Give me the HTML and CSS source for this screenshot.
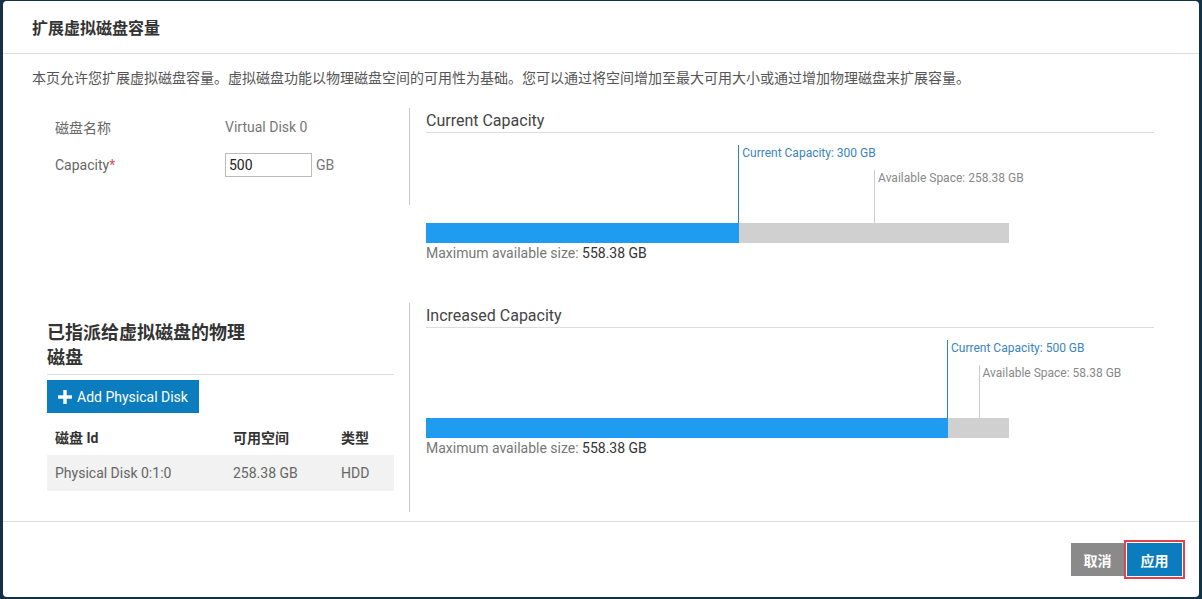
FILE: index.html
```html
<!DOCTYPE html>
<html lang="zh-CN">
<head>
    <meta charset="UTF-8">
    <meta name="viewport" content="width=device-width, initial-scale=1.0">
    <title>扩展虚拟磁盘容量</title>
    <link rel="stylesheet" href="styles.css">
</head>
<body>
    <div class="modal">
        <div class="modal-header">
            <h1>扩展虚拟磁盘容量</h1>
        </div>

        <div class="modal-body">
            <p class="intro">本页允许您扩展虚拟磁盘容量。虚拟磁盘功能以物理磁盘空间的可用性为基础。您可以通过将空间增加至最大可用大小或通过增加物理磁盘来扩展容量。</p>

            <div class="row row-top">
                <div class="left-col form-col">
                    <div class="form-row">
                        <span class="form-label">磁盘名称</span>
                        <span class="form-value">Virtual Disk 0</span>
                    </div>
                    <div class="form-row">
                        <span class="form-label">Capacity<span class="required">*</span></span>
                        <span class="form-value">
                            <input type="text" class="capacity-input" value="500">
                            <span class="unit">GB</span>
                        </span>
                    </div>
                </div>
                <div class="right-col">
                    <h2>Current Capacity</h2>
                    <div class="chart" data-current="300" data-max="558.38"></div>
                    <p class="max-size">Maximum available size: <span>558.38 GB</span></p>
                </div>
            </div>

            <div class="row row-bottom">
                <div class="left-col disk-col">
                    <h3>已指派给虚拟磁盘的物理磁盘</h3>
                    <button class="btn-add">
                        <svg width="14" height="14" viewBox="0 0 14 14"><rect x="5.3" y="0" width="3.4" height="14" fill="#fff"/><rect x="0" y="5.3" width="14" height="3.4" fill="#fff"/></svg>
                        Add Physical Disk
                    </button>
                    <table class="disk-table">
                        <thead>
                            <tr>
                                <th class="c-id">磁盘 Id</th>
                                <th class="c-free">可用空间</th>
                                <th class="c-type">类型</th>
                            </tr>
                        </thead>
                        <tbody>
                            <tr>
                                <td>Physical Disk 0:1:0</td>
                                <td>258.38 GB</td>
                                <td>HDD</td>
                            </tr>
                        </tbody>
                    </table>
                </div>
                <div class="right-col">
                    <h2>Increased Capacity</h2>
                    <div class="chart" data-current="500" data-max="558.38"></div>
                    <p class="max-size">Maximum available size: <span>558.38 GB</span></p>
                </div>
            </div>
        </div>

        <div class="modal-footer">
            <button class="btn btn-cancel">取消</button>
            <div class="highlight">
                <button class="btn btn-apply">应用</button>
            </div>
        </div>
    </div>

    <script>
        function fmt(n) {
            return Math.round(n * 100) / 100;
        }

        document.querySelectorAll('.chart').forEach(chart => {
            const current = parseFloat(chart.dataset.current);
            const max = parseFloat(chart.dataset.max);
            const used = current / max * 100;
            const avail = used + (100 - used) / 2;

            chart.innerHTML = `
                <div class="marker marker-current" style="left: ${used}%">
                    <span>Current Capacity: ${fmt(current)} GB</span>
                </div>
                <div class="marker marker-avail" style="left: ${avail}%">
                    <span>Available Space: ${fmt(max - current)} GB</span>
                </div>
                <div class="bar">
                    <div class="bar-used" style="width: ${used}%"></div>
                </div>
            `;
        });
    </script>
</body>
</html>
```

FILE: styles.css
```css
* {
    margin: 0;
    padding: 0;
    box-sizing: border-box;
}

body {
    font-family: Roboto, "Noto Sans CJK SC", sans-serif;
    font-size: 14px;
    color: #555;
    background-color: #153244;
    padding: 1px 3px 2px 3px;
}

.modal {
    background-color: #fff;
    border-radius: 4px;
    height: 596px;
    overflow: hidden;
}

.modal-header {
    height: 53px;
    padding: 0 29px;
    display: flex;
    align-items: center;
    border-bottom: 1px solid #ddd;
}

.modal-header h1 {
    font-size: 16px;
    font-weight: bold;
    color: #333;
}

.modal-body {
    padding: 14px 30px 9px 29px;
}

.intro {
    line-height: 20px;
    color: #555;
    margin-bottom: 20px;
}

.row {
    display: flex;
    align-items: flex-start;
}

.row-bottom {
    margin-top: 40px;
}

.left-col {
    width: 378px;
    flex-shrink: 0;
    border-right: 1px solid #c8c8c8;
}

.right-col {
    flex: 1;
    padding: 2px 15px 0 16px;
}

/* form */
.form-col {
    padding: 0 0 21px 23px;
}

.form-row {
    display: flex;
    align-items: center;
    height: 38px;
}

.form-label {
    width: 170px;
    color: #666;
}

.required {
    color: #d9534f;
}

.form-value {
    display: flex;
    align-items: center;
    color: #777;
}

.capacity-input {
    width: 87px;
    height: 24px;
    border: 1px solid #bbb;
    padding: 0 3px;
    font-family: Roboto, sans-serif;
    font-size: 14px;
    color: #222;
}

.unit {
    margin-left: 4px;
    color: #777;
}

/* charts */
.right-col h2 {
    font-size: 16px;
    font-weight: normal;
    color: #444;
    line-height: 22px;
    border-bottom: 1px solid #ddd;
}

.chart {
    position: relative;
    width: 583px;
    height: 110px;
    display: flex;
    align-items: flex-end;
}

.bar {
    width: 100%;
    height: 20px;
    background-color: #d0d0d0;
}

.bar-used {
    height: 100%;
    background-color: #1f9bf0;
}

.marker {
    position: absolute;
    bottom: 20px;
    border-left: 1px solid #ccc;
    font-size: 12px;
    line-height: 16px;
    white-space: nowrap;
}

.marker span {
    display: block;
    padding-left: 3px;
}

.marker-current {
    top: 12px;
    margin-left: -1px;
    border-left-color: #2a80c0;
    color: #3a84c0;
}

.marker-avail {
    top: 37px;
    color: #888;
}

.max-size {
    font-size: 14px;
    line-height: 20px;
    color: #777;
}

.max-size span {
    color: #333;
}

/* physical disks */
.disk-col {
    padding: 17px 15px 21px 15px;
}

.disk-col h3 {
    font-size: 18px;
    font-weight: bold;
    color: #333;
    line-height: 25px;
    padding: 0 140px 4px 0;
    border-bottom: 1px solid #ddd;
}

.btn-add {
    margin-top: 5px;
    height: 33px;
    padding: 0 11px;
    border: none;
    background-color: #0b7dbf;
    color: #fff;
    font-family: Roboto, sans-serif;
    font-size: 14px;
    display: flex;
    align-items: center;
    gap: 5px;
}

.disk-table {
    width: 100%;
    border-collapse: collapse;
}

.disk-table th {
    text-align: left;
    font-weight: bold;
    color: #333;
    padding: 14px 8px 8px 8px;
    height: 42px;
}

.disk-table td {
    height: 36px;
    padding: 0 8px;
    background-color: #f2f2f2;
    color: #666;
}

.c-id {
    width: 178px;
}

.c-free {
    width: 108px;
}

/* footer */
.modal-footer {
    border-top: 1px solid #ddd;
    display: flex;
    justify-content: flex-end;
    align-items: center;
    padding: 18px 14px 0 0;
}

.btn {
    height: 33px;
    border: none;
    color: #fff;
    font-family: "Noto Sans CJK SC", sans-serif;
    font-size: 14px;
    font-weight: bold;
    cursor: pointer;
}

.btn-cancel {
    width: 53px;
    background-color: #8a8a8a;
}

.highlight {
    border: 2px solid #e8404a;
    padding: 1px;
}

.btn-apply {
    width: 55px;
    background-color: #0b7dbf;
}
```
